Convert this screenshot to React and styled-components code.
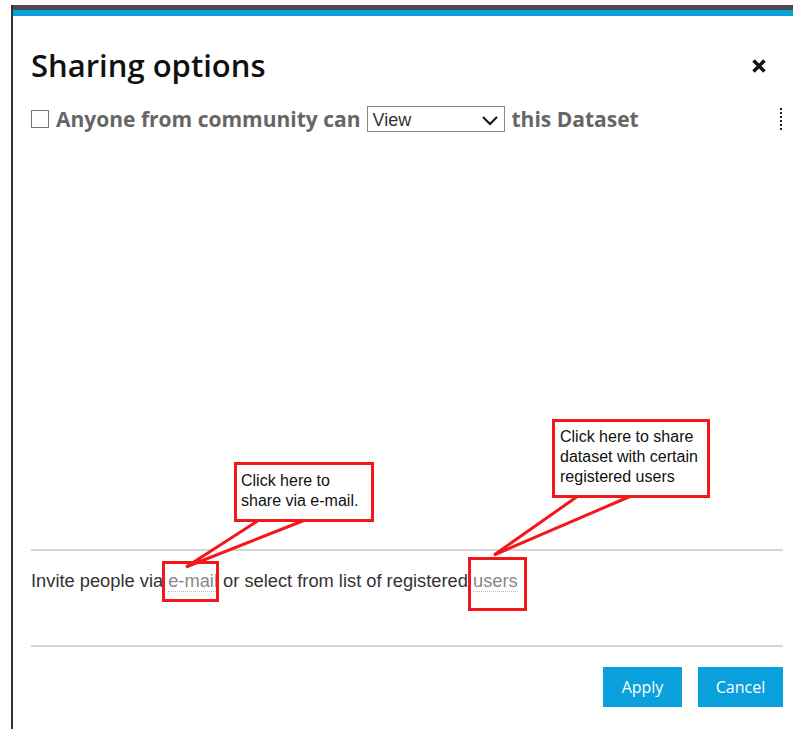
import React from 'react';
import styled, { createGlobalStyle } from 'styled-components';

const GlobalStyle = createGlobalStyle`
  html, body {
    margin: 0;
    padding: 0;
    background: #fff;
  }
  body {
    font-family: "Open Sans", "Liberation Sans", sans-serif;
  }
`;

const Page = styled.div`
  position: relative;
  width: 793px;
  height: 729px;
  overflow: hidden;
  padding: 5px 0 0 11px;
  box-sizing: border-box;
`;

const Dialog = styled.div`
  height: 100%;
  border-left: 2px solid #333;
  display: flex;
  flex-direction: column;
`;

const TopBar = styled.div`
  height: 5px;
  background: #4a4a4a;
  border-bottom: 6px solid #0aa0dc;
`;

const Content = styled.div`
  flex: 1;
  display: flex;
  flex-direction: column;
  padding: 31px 10px 0 18px;
`;

const Header = styled.div`
  display: flex;
  align-items: center;
  justify-content: space-between;
  height: 36px;
`;

const Title = styled.h1`
  margin: 0;
  font-size: 31px;
  line-height: 36px;
  font-weight: 600;
  color: #111;
`;

const CloseButton = styled.button`
  border: none;
  background: none;
  padding: 0;
  margin: 2px 16px 0 0;
  width: 16px;
  height: 16px;
  display: flex;
`;

const ShareRow = styled.div`
  display: flex;
  align-items: center;
  margin-top: 23px;
  height: 26px;
  font-size: 21px;
  font-weight: 700;
  color: #666;
`;

const Check = styled.span`
  width: 16px;
  height: 16px;
  border: 1px solid #777;
  background: #fff;
  margin-right: 7px;
`;

const Select = styled.div`
  display: flex;
  align-items: center;
  justify-content: space-between;
  box-sizing: border-box;
  width: 138px;
  height: 26px;
  margin: 0 7px 0 6px;
  padding: 2px 5px 0 5px;
  border: 1px solid #8a8a8a;
  font-family: "Liberation Sans", Arial, sans-serif;
  font-size: 18px;
  font-weight: 400;
  color: #333;
`;

const Dots = styled.span`
  margin-left: auto;
  margin-right: 1px;
  height: 22px;
  border-left: 2px dotted #222;
`;

const Spacer = styled.div`
  flex: 0 0 417px;
`;

const Rule = styled.hr`
  margin: 0;
  border: none;
  border-top: 2px solid #d6d6d6;
`;

const Invite = styled.p`
  margin: 0;
  padding: 19px 0 53px;
  font-family: "Liberation Sans", Arial, sans-serif;
  font-size: 18.3px;
  line-height: 22px;
  color: #333;
`;

const Target = styled.a`
  color: #888;
  text-decoration: none;
  border-bottom: 1px dotted #bbb;
`;

const Footer = styled.div`
  display: flex;
  justify-content: flex-end;
  gap: 16px;
  padding-top: 20px;
`;

const Button = styled.button`
  height: 40px;
  width: ${p => p.$w}px;
  border: none;
  background: #0aa0dc;
  color: #fff;
  font-family: "Open Sans", sans-serif;
  font-size: 16px;
  padding: 0;
`;

/* red review annotations laid over the dialog */
const Callout = styled.div`
  position: absolute;
  left: ${p => p.$x}px;
  top: ${p => p.$y}px;
  width: ${p => p.$w}px;
  height: ${p => p.$h}px;
  box-sizing: border-box;
  border: 3px solid #f5161a;
  background: #fff;
  padding: ${p => p.$pad};
  font-family: "Liberation Sans", Arial, sans-serif;
  font-size: 16px;
  line-height: 20px;
  color: #111;
  white-space: pre-line;
`;

const Mark = styled.div`
  position: absolute;
  left: ${p => p.$x}px;
  top: ${p => p.$y}px;
  width: ${p => p.$w}px;
  height: ${p => p.$h}px;
  box-sizing: border-box;
  border: 3px solid #f5161a;
`;

const Pointers = styled.svg`
  position: absolute;
  left: 0;
  top: 0;
  pointer-events: none;
`;

const Pointer = ({ a, b, tip }) => (
  <g>
    <polygon points={`${a[0]},${a[1] - 3} ${b[0]},${b[1] - 3} ${b[0]},${b[1]} ${tip[0]},${tip[1]} ${a[0]},${a[1]}`} fill="#fff" />
    <polyline points={`${a[0]},${a[1]} ${tip[0]},${tip[1]} ${b[0]},${b[1]}`} fill="none" stroke="#f5161a" strokeWidth="3" strokeLinejoin="miter" />
  </g>
);

export default function App() {
  return (
    <>
      <GlobalStyle />
      <Page>
        <Dialog>
          <TopBar />
          <Content>
            <Header>
              <Title>Sharing options</Title>
              <CloseButton aria-label="close">
                <svg width="16" height="16" viewBox="0 0 16 16">
                  <path d="M2.5 2.5 L13.5 13.5 M13.5 2.5 L2.5 13.5" stroke="#111" strokeWidth="3.4" />
                </svg>
              </CloseButton>
            </Header>
            <ShareRow>
              <Check />
              Anyone from community can
              <Select>
                View
                <svg width="18" height="12" viewBox="0 0 18 12">
                  <path d="M2 3 L9 10 L16 3" fill="none" stroke="#111" strokeWidth="2" />
                </svg>
              </Select>
              this Dataset
              <Dots />
            </ShareRow>
            <Spacer />
            <Rule />
            <Invite>
              Invite people via <Target>e-mail</Target> or select from list of registered <Target>users</Target> .
            </Invite>
            <Rule />
            <Footer>
              <Button $w={79}>Apply</Button>
              <Button $w={85}>Cancel</Button>
            </Footer>
          </Content>
        </Dialog>

        <Pointers width="793" height="729">
          <Pointer a={[259, 520]} b={[305, 520]} tip={[186, 567]} />
          <Pointer a={[578, 496]} b={[631, 496]} tip={[494, 555]} />
        </Pointers>
        <Callout $x={234} $y={462} $w={140} $h={60} $pad="6px 4px">
          {'Click here to\nshare via e-mail.'}
        </Callout>
        <Callout $x={552} $y={419} $w={158} $h={79} $pad="5px 5px">
          {'Click here to share\ndataset with certain\nregistered users'}
        </Callout>
        <Mark $x={162} $y={561} $w={57} $h={41} />
        <Mark $x={468} $y={557} $w={59} $h={54} />
      </Page>
    </>
  );
}
